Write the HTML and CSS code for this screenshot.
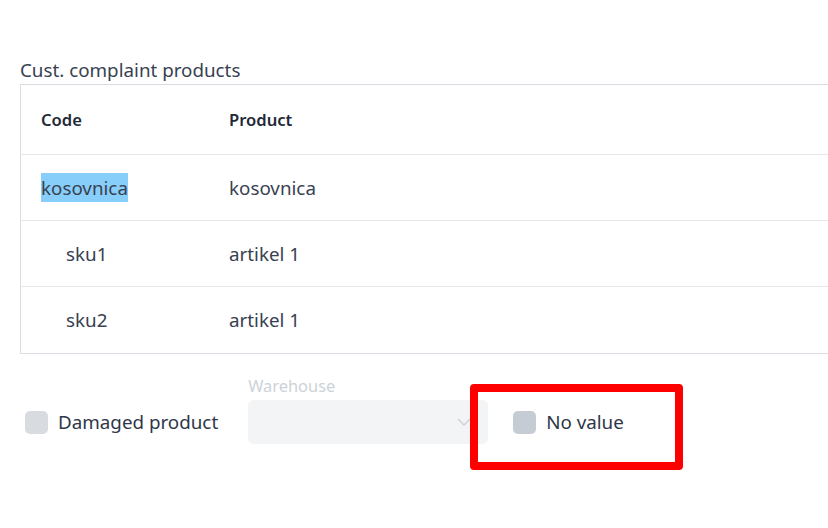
FILE: index.html
```html
<!DOCTYPE html>
<html>
<head>
<meta charset="utf-8">
<link rel="stylesheet" href="styles.css">
</head>
<body>
<div class="page">
  <div class="title">Cust. complaint products</div>
  <table class="products">
    <thead>
      <tr><th class="col-code">Code</th><th>Product</th></tr>
    </thead>
    <tbody>
      <tr><td class="col-code"><span class="selected">kosovnica</span></td><td>kosovnica</td></tr>
      <tr><td class="col-code child">sku1</td><td>artikel 1</td></tr>
      <tr class="last"><td class="col-code child">sku2</td><td>artikel 1</td></tr>
    </tbody>
  </table>
  <div class="options">
    <label class="check damaged"><span class="box"></span><span>Damaged product</span></label>
    <div class="field">
      <div class="field-label">Warehouse</div>
      <div class="select">
        <svg class="chevron" width="14" height="8" viewBox="0 0 14 8"><polyline points="1,1 7,7 13,1" fill="none" stroke="#cdd1d8" stroke-width="1.5"/></svg>
      </div>
    </div>
    <label class="check novalue"><span class="box dark"></span><span>No value</span><span class="highlight"></span></label>
  </div>
</div>
</body>
</html>
```
FILE: styles.css
```css
html {
  overflow: hidden;
}
body {
  margin: 0;
  background: #fff;
  font-family: "Noto Sans", "Open Sans", sans-serif;
  color: #374151;
}
.page {
  padding: 57px 0 0 20px;
  height: 528px;
  box-sizing: border-box;
  overflow: hidden;
}
.title {
  font-size: 18.8px;
  line-height: 27px;
  color: #374151;
}
.products {
  border-collapse: collapse;
  width: 900px;
  border: 1px solid #d9dde3;
  border-right: none;
}
.products th {
  height: 69px;
  padding: 0 0 0 20px;
  text-align: left;
  font-size: 16.6px;
  font-weight: 600;
  color: #1f2937;
}
.products td {
  height: 65px;
  padding: 0 0 0 20px;
  border-top: 1px solid #e5e7eb;
  font-size: 18.8px;
  color: #374151;
}
.products tr.last td {
  height: 66px;
}
.products .col-code {
  width: 168px;
}
.products td.child {
  padding-left: 45px;
  width: 143px;
}
.selected {
  background: #87cefa;
  padding: 2px 0 1px;
}
.options {
  display: flex;
  align-items: flex-end;
  margin-top: 22px;
}
.check {
  display: flex;
  align-items: center;
  gap: 10px;
  height: 44px;
  font-size: 18.8px;
  color: #2d3748;
}
.damaged {
  margin-left: 5px;
}
.box {
  width: 23px;
  height: 23px;
  border-radius: 5px;
  background: #d8dce1;
}
.box.dark {
  background: #c6ccd4;
}
.field {
  margin-left: 30px;
}
.field-label {
  font-size: 16.4px;
  line-height: 20px;
  margin-bottom: 4px;
  color: #cdd2d9;
}
.select {
  width: 240px;
  height: 44px;
  border-radius: 6px;
  background: #f3f4f6;
  display: flex;
  align-items: center;
  justify-content: flex-end;
  box-sizing: border-box;
  padding-right: 17px;
}
.novalue {
  margin-left: 25px;
  position: relative;
}
.highlight {
  position: absolute;
  left: -43px;
  top: -16px;
  width: 213px;
  height: 86px;
  box-sizing: border-box;
  border: 8px solid #ff0000;
  border-radius: 4px;
}
```
